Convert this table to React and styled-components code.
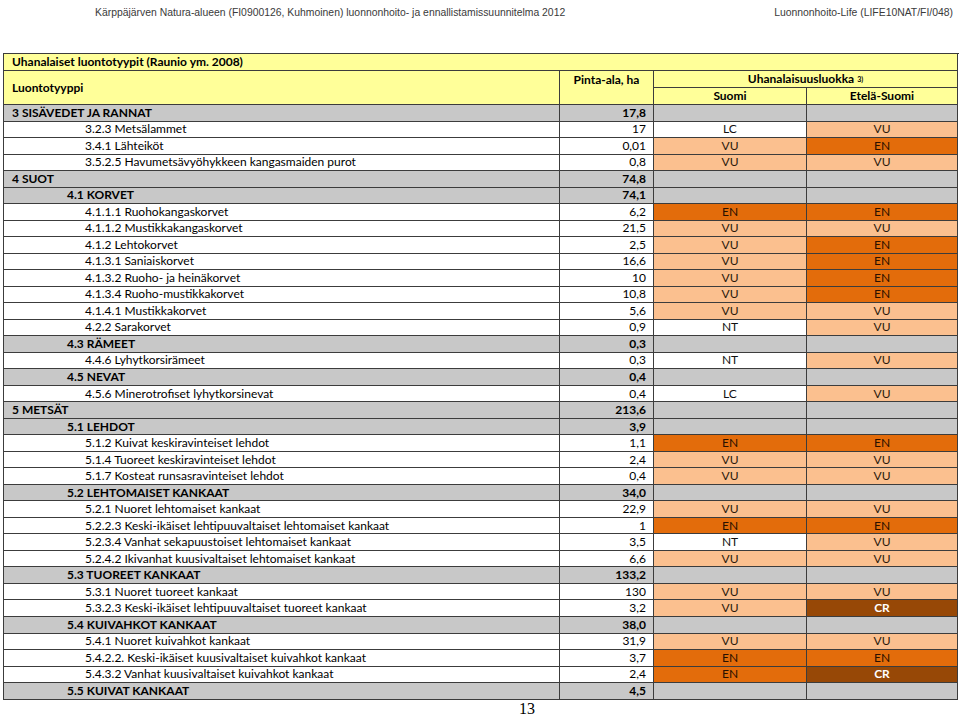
import React from 'react';
import styled, { createGlobalStyle } from 'styled-components';

const GlobalStyle = createGlobalStyle`
  html, body {
    margin: 0;
    padding: 0;
    background: #fff;
  }
  body {
    font-family: Lato, "Open Sans", sans-serif;
    color: #000;
  }
`;

const classColors = {
  LC: { bg: '#ffffff', fg: '#111' },
  NT: { bg: '#ffffff', fg: '#111' },
  VU: { bg: '#fbc08f', fg: '#2b1a0c' },
  EN: { bg: '#e36c0b', fg: '#2a1000' },
  CR: { bg: '#974806', fg: '#ffffff' },
};

const rows = [
  [0, '3 SISÄVEDET JA RANNAT', '17,8'],
  [2, '3.2.3 Metsälammet', '17', 'LC', 'VU'],
  [2, '3.4.1 Lähteiköt', '0,01', 'VU', 'EN'],
  [2, '3.5.2.5 Havumetsävyöhykkeen kangasmaiden purot', '0,8', 'VU', 'VU'],
  [0, '4 SUOT', '74,8'],
  [1, '4.1 KORVET', '74,1'],
  [2, '4.1.1.1 Ruohokangaskorvet', '6,2', 'EN', 'EN'],
  [2, '4.1.1.2 Mustikkakangaskorvet', '21,5', 'VU', 'VU'],
  [2, '4.1.2 Lehtokorvet', '2,5', 'VU', 'EN'],
  [2, '4.1.3.1 Saniaiskorvet', '16,6', 'VU', 'EN'],
  [2, '4.1.3.2 Ruoho- ja heinäkorvet', '10', 'VU', 'EN'],
  [2, '4.1.3.4 Ruoho-mustikkakorvet', '10,8', 'VU', 'EN'],
  [2, '4.1.4.1 Mustikkakorvet', '5,6', 'VU', 'VU'],
  [2, '4.2.2 Sarakorvet', '0,9', 'NT', 'VU'],
  [1, '4.3 RÄMEET', '0,3'],
  [2, '4.4.6 Lyhytkorsirämeet', '0,3', 'NT', 'VU'],
  [1, '4.5 NEVAT', '0,4'],
  [2, '4.5.6 Minerotrofiset lyhytkorsinevat', '0,4', 'LC', 'VU'],
  [0, '5 METSÄT', '213,6'],
  [1, '5.1 LEHDOT', '3,9'],
  [2, '5.1.2 Kuivat keskiravinteiset lehdot', '1,1', 'EN', 'EN'],
  [2, '5.1.4 Tuoreet keskiravinteiset lehdot', '2,4', 'VU', 'VU'],
  [2, '5.1.7 Kosteat runsasravinteiset lehdot', '0,4', 'VU', 'VU'],
  [1, '5.2 LEHTOMAISET KANKAAT', '34,0'],
  [2, '5.2.1 Nuoret lehtomaiset kankaat', '22,9', 'VU', 'VU'],
  [2, '5.2.2.3 Keski-ikäiset lehtipuuvaltaiset lehtomaiset kankaat', '1', 'EN', 'EN'],
  [2, '5.2.3.4 Vanhat sekapuustoiset lehtomaiset kankaat', '3,5', 'NT', 'VU'],
  [2, '5.2.4.2 Ikivanhat kuusivaltaiset lehtomaiset kankaat', '6,6', 'VU', 'VU'],
  [1, '5.3 TUOREET KANKAAT', '133,2'],
  [2, '5.3.1 Nuoret tuoreet kankaat', '130', 'VU', 'VU'],
  [2, '5.3.2.3 Keski-ikäiset lehtipuuvaltaiset tuoreet kankaat', '3,2', 'VU', 'CR'],
  [1, '5.4 KUIVAHKOT KANKAAT', '38,0'],
  [2, '5.4.1 Nuoret kuivahkot kankaat', '31,9', 'VU', 'VU'],
  [2, '5.4.2.2. Keski-ikäiset kuusivaltaiset kuivahkot kankaat', '3,7', 'EN', 'EN'],
  [2, '5.4.3.2 Vanhat kuusivaltaiset kuivahkot kankaat', '2,4', 'EN', 'CR'],
  [1, '5.5 KUIVAT KANKAAT', '4,5'],
];

// left padding of the first column per hierarchy level
const indents = [8, 63, 81];

const Page = styled.div`
  display: flex;
  flex-direction: column;
  width: 960px;
`;

const RunningHead = styled.header`
  display: flex;
  justify-content: space-between;
  padding: 6px 7px 0 95px;
  font-family: "Liberation Sans", Arial, sans-serif;
  font-size: 10.4px;
  line-height: 14px;
  color: #3a3a3a;
`;

const Table = styled.div`
  display: grid;
  grid-template-columns: 556px 94px 153px 151px;
  grid-template-rows: 17px 17px 17px repeat(${rows.length}, 16.53px);
  width: 955px;
  margin: 33px 0 0 3px;
  border-left: 1px solid #3c3c3c;
  border-top: 1px solid #3c3c3c;
  font-size: 12px;
`;

const Cell = styled.div`
  display: flex;
  align-items: ${p => (p.$top ? 'flex-start' : 'center')};
  justify-content: ${p => ({ left: 'flex-start', right: 'flex-end', center: 'center' }[p.$align || 'left'])};
  grid-column: ${p => p.$span || 'auto'};
  grid-row: ${p => p.$rows || 'auto'};
  padding: ${p => (p.$top ? '2px' : '0')} 7px 0 ${p => p.$indent ?? 7}px;
  background: ${p => p.$bg || '#fff'};
  color: ${p => p.$fg || '#000'};
  font-weight: ${p => (p.$bold ? 700 : 400)};
  line-height: 14px;
  white-space: nowrap;
  overflow: hidden;
  box-sizing: border-box;
  border-right: 1px solid #3c3c3c;
  border-bottom: 1px solid #3c3c3c;
`;

const Sub = styled.sub`
  font-size: 7px;
  margin-left: 3px;
  vertical-align: -2px;
`;

const PageNumber = styled.footer`
  padding: 2px 0 0 519px;
  font-family: "Liberation Serif", "Times New Roman", serif;
  font-size: 16px;
  line-height: 14px;
`;

const YELLOW = '#ffff99';
const GRAY = '#c8c8c8';

const ClassCell = ({ value, group }) => {
  if (group) return <Cell $bg={GRAY} />;
  const c = classColors[value];
  return (
    <Cell $align="center" $bg={c.bg} $fg={c.fg} $bold={value === 'CR'}>
      {value}
    </Cell>
  );
};

const DataRow = ({ level, label, area, fi, south }) => {
  const group = level < 2;
  const bg = group ? GRAY : '#fff';
  return (
    <>
      <Cell $indent={indents[level]} $bold={group} $bg={bg}>{label}</Cell>
      <Cell $align="right" $bold={group} $bg={bg}>{area}</Cell>
      <ClassCell value={fi} group={group} />
      <ClassCell value={south} group={group} />
    </>
  );
};

export default function App() {
  return (
    <Page>
      <GlobalStyle />
      <RunningHead>
        <span>Kärppäjärven Natura-alueen (FI0900126, Kuhmoinen) luonnonhoito- ja ennallistamissuunnitelma 2012</span>
        <span>Luonnonhoito-Life (LIFE10NAT/FI/048)</span>
      </RunningHead>
      <Table>
        <Cell $span="1 / 5" $bg={YELLOW} $bold $indent={8}>Uhanalaiset luontotyypit (Raunio ym. 2008)</Cell>
        <Cell $rows="2 / 4" $bg={YELLOW} $bold $indent={8}>Luontotyyppi</Cell>
        <Cell $rows="2 / 4" $bg={YELLOW} $bold $align="center" $top>Pinta-ala, ha</Cell>
        <Cell $span="3 / 5" $bg={YELLOW} $bold $align="center">
          Uhanalaisuusluokka<Sub>3)</Sub>
        </Cell>
        <Cell $bg={YELLOW} $bold $align="center">Suomi</Cell>
        <Cell $bg={YELLOW} $bold $align="center">Etelä-Suomi</Cell>
        {rows.map(([level, label, area, fi, south]) => (
          <DataRow key={label} level={level} label={label} area={area} fi={fi} south={south} />
        ))}
      </Table>
      <PageNumber>13</PageNumber>
    </Page>
  );
}
